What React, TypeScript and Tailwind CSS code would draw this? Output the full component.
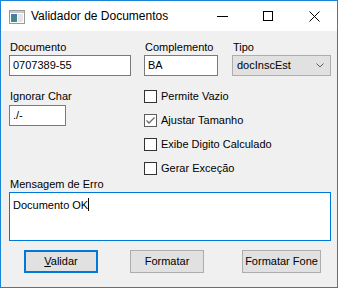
import React from 'react'

function AppIcon() {
  return (
    <svg width="16" height="14" viewBox="0 0 16 14">
      <rect x="0.5" y="0.5" width="15" height="13" fill="#ffffff" stroke="#9a9a9a" />
      <rect x="1" y="1" width="14" height="2" fill="#c8c8c8" />
      <rect x="2" y="4" width="6" height="8" fill="#3c8f7a" />
      <rect x="2" y="4" width="6" height="3" fill="#4a79b8" />
      <rect x="9" y="4" width="5" height="8" fill="#e6e6e6" />
    </svg>
  )
}

function TitleBar() {
  return (
    <div className="flex h-[30px] items-center bg-white">
      <div className="ml-[8px] mr-[6px] flex items-center pt-[2px]">
        <AppIcon />
      </div>
      <span className="text-[12px] text-black">Validador de Documentos</span>
      <div className="ml-auto flex h-full items-center">
        <div className="flex w-[46px] justify-center">
          <div className="h-px w-[11px] bg-black" />
        </div>
        <div className="flex w-[46px] justify-center">
          <div className="h-[10px] w-[10px] border border-black" />
        </div>
        <div className="flex w-[46px] justify-center">
          <svg width="11" height="11" viewBox="0 0 11 11">
            <path d="M0.5 0.5 L10.5 10.5 M10.5 0.5 L0.5 10.5" stroke="#000" strokeWidth="1" />
          </svg>
        </div>
      </div>
    </div>
  )
}

function TextBox({ value, width }: { value: string; width: string }) {
  return (
    <div className={`${width} flex h-[21px] items-center border border-[#7a7a7a] bg-white px-[3px] text-[11px]`}>
      {value}
    </div>
  )
}

function CheckBox({ label, checked }: { label: string; checked?: boolean }) {
  return (
    <div className="flex h-[24px] items-center">
      <div
        className={`flex h-[13px] w-[13px] items-center justify-center border bg-white ${
          checked ? 'border-[#5c5c5c]' : 'border-[#333333]'
        }`}
      >
        {checked && (
          <svg width="11" height="11" viewBox="0 0 11 11">
            <path d="M1.5 5.5 L4 8 L9.5 2.5" fill="none" stroke="#6b6b6b" strokeWidth="1.3" />
          </svg>
        )}
      </div>
      <span className="ml-[4px] text-[11px]">{label}</span>
    </div>
  )
}

function Button({ children, focused, width }: { children: React.ReactNode; focused?: boolean; width: string }) {
  return (
    <div
      className={`${width} flex h-[23px] items-center justify-center bg-[#e1e1e1] text-[11px] ${
        focused ? 'border-2 border-[#0078d7]' : 'border border-[#adadad]'
      }`}
    >
      {children}
    </div>
  )
}

export default function App() {
  return (
    <div
      className="flex h-[288px] w-[338px] flex-col border border-[#1883d7] text-black"
      style={{ fontFamily: '"Liberation Sans", Arial, sans-serif' }}
    >
      <TitleBar />
      <div className="flex flex-1 flex-col bg-[#f0f0f0] pl-[8px] pr-[6px] pt-[10px]">
        {/* top row */}
        <div className="flex">
          <div className="flex w-[135px] flex-col">
            <span className="ml-[1px] h-[14px] text-[11px] leading-[13px]">Documento</span>
            <TextBox value="0707389-55" width="w-[122px]" />
          </div>
          <div className="flex w-[88px] flex-col">
            <span className="ml-[1px] h-[14px] text-[11px] leading-[13px]">Complemento</span>
            <TextBox value="BA" width="w-[74px]" />
          </div>
          <div className="flex flex-col">
            <span className="ml-[1px] h-[14px] text-[11px] leading-[13px]">Tipo</span>
            <div className="flex h-[21px] w-[99px] items-center border border-[#adadad] bg-[#e1e1e1] pl-[4px] pr-[6px] text-[11px]">
              <span>docInscEst</span>
              <svg className="ml-auto" width="8" height="5" viewBox="0 0 8 5">
                <path d="M0.5 0.5 L4 4 L7.5 0.5" fill="none" stroke="#606060" strokeWidth="1" />
              </svg>
            </div>
          </div>
        </div>

        {/* middle row */}
        <div className="mt-[10px] flex">
          <div className="flex w-[135px] flex-col pt-[4px]">
            <span className="ml-[1px] h-[15px] text-[11px] leading-[13px]">Ignorar Char</span>
            <TextBox value="./-" width="w-[57px]" />
          </div>
          <div className="-mt-[2px] flex flex-col">
            <CheckBox label="Permite Vazio" />
            <CheckBox label="Ajustar Tamanho" checked />
            <CheckBox label="Exibe Digito Calculado" />
            <CheckBox label="Gerar Exceção" />
          </div>
        </div>

        {/* message */}
        <span className="-mt-[2px] ml-[1px] h-[14px] text-[11px] leading-[13px]">Mensagem de Erro</span>
        <div className="h-[49px] w-[322px] border border-[#0078d7] bg-white px-[3px] pt-[3px] text-[11px] leading-[13px]">
          <span>Documento OK</span>
          <span className="inline-block h-[13px] w-px translate-y-[2px] bg-black" />
        </div>

        {/* buttons */}
        <div className="mt-[9px] flex pl-[15px]">
          <Button focused width="w-[74px]">
            <span>
              <span className="underline">V</span>alidar
            </span>
          </Button>
          <div className="ml-[32px]">
            <Button width="w-[74px]">Formatar</Button>
          </div>
          <div className="ml-[38px]">
            <Button width="w-[79px]">Formatar Fone</Button>
          </div>
        </div>
      </div>
    </div>
  )
}
